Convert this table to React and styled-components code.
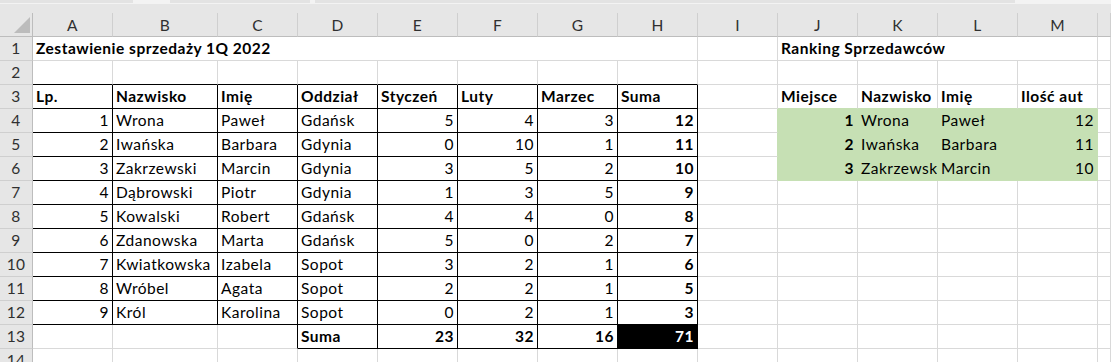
import React from 'react';
import styled, { createGlobalStyle } from 'styled-components';

const GlobalStyle = createGlobalStyle`
    body {
        margin: 0;
        background: #ffffff;
        font-family: Lato, "Liberation Sans", sans-serif;
        overflow: hidden;
    }
`

const GRID = '#d9d9d9';
const HEAD_BG = '#e6e6e6';
const HEAD_LINE = '#cfcfcf';
const GREEN = '#c6e0b4';

const Sheet = styled.div`
    width: 1111px;
    height: 362px;
    overflow: hidden;
    background: #ffffff;
`

// leftover bottom edge of the formula bar
const TopStrip = styled.div`
    height: 4px;
    background: #f3f3f3;
    display: flex;
`

const StripPiece = styled.div`
    width: ${props => props.width};
    margin-left: ${props => props.gap || '0'};
    height: 3px;
    background: #e3e3e3;
`

const HeaderPad = styled.div`
    height: 9px;
    background: ${HEAD_BG};
`

const Grid = styled.div`
    display: grid;
    grid-template-columns: 33px 80px 105px repeat(11, 80px) 1fr;
    grid-template-rows: 24px;
    grid-auto-rows: 24px;
`

const Corner = styled.div`
    box-sizing: border-box;
    background: ${HEAD_BG};
    border-right: 1px solid #bdbdbd;
    border-bottom: 1px solid #bdbdbd;
    display: flex;
    align-items: flex-end;
    justify-content: flex-end;
    padding: 0 2px 3px 0;
`

const ColHead = styled.div`
    box-sizing: border-box;
    background: ${HEAD_BG};
    border-right: 1px solid ${HEAD_LINE};
    border-bottom: 1px solid #bdbdbd;
    display: flex;
    align-items: center;
    justify-content: center;
    font-size: 15.5px;
    letter-spacing: 0.3px;
    color: #303030;
`

const RowHead = styled.div`
    box-sizing: border-box;
    background: ${HEAD_BG};
    border-right: 1px solid #bdbdbd;
    border-bottom: 1px solid ${HEAD_LINE};
    display: flex;
    align-items: flex-end;
    justify-content: center;
    padding-bottom: 3px;
    font-size: 15.5px;
    line-height: 18px;
    letter-spacing: 0.3px;
    color: #303030;
`

const Cell = styled.div`
    box-sizing: border-box;
    grid-column: span ${props => props.$span || 1};
    background: ${props => props.$fill || '#ffffff'};
    border-right: 1px solid ${props => props.$right};
    border-bottom: 1px solid ${props => props.$bottom};
    display: flex;
    align-items: flex-end;
    justify-content: ${props => props.$align === 'right' ? 'flex-end' : 'flex-start'};
    padding: 0 3px 3px 3px;
    font-size: 15.5px;
    line-height: 18px;
    letter-spacing: 0.5px;
    font-weight: ${props => props.$bold ? 700 : 400};
    color: ${props => props.$color || '#000000'};
    white-space: nowrap;
    overflow: hidden;
`

const COLS = ['A', 'B', 'C', 'D', 'E', 'F', 'G', 'H', 'I', 'J', 'K', 'L', 'M', 'N'];
const ROWS = 14;

const sales = [
    [1, 'Wrona', 'Paweł', 'Gdańsk', 5, 4, 3, 12],
    [2, 'Iwańska', 'Barbara', 'Gdynia', 0, 10, 1, 11],
    [3, 'Zakrzewski', 'Marcin', 'Gdynia', 3, 5, 2, 10],
    [4, 'Dąbrowski', 'Piotr', 'Gdynia', 1, 3, 5, 9],
    [5, 'Kowalski', 'Robert', 'Gdańsk', 4, 4, 0, 8],
    [6, 'Zdanowska', 'Marta', 'Gdańsk', 5, 0, 2, 7],
    [7, 'Kwiatkowska', 'Izabela', 'Sopot', 3, 2, 1, 6],
    [8, 'Wróbel', 'Agata', 'Sopot', 2, 2, 1, 5],
    [9, 'Król', 'Karolina', 'Sopot', 0, 2, 1, 3],
];

const ranking = [
    [1, 'Wrona', 'Paweł', 12],
    [2, 'Iwańska', 'Barbara', 11],
    [3, 'Zakrzewski', 'Marcin', 10],
];

const buildCells = () => {
    const cells = {};
    cells.A1 = { v: 'Zestawienie sprzedaży 1Q 2022', bold: true, span: 8 };
    cells.J1 = { v: 'Ranking Sprzedawców', bold: true, span: 4 };

    ['Lp.', 'Nazwisko', 'Imię', 'Oddział', 'Styczeń', 'Luty', 'Marzec', 'Suma'].forEach((v, i) => {
        cells[COLS[i] + 3] = { v, bold: true };
    });
    sales.forEach((row, r) => {
        row.forEach((v, c) => {
            cells[COLS[c] + (r + 4)] = { v, bold: c === 7 };
        });
    });
    cells.D13 = { v: 'Suma', bold: true };
    cells.E13 = { v: 23, bold: true };
    cells.F13 = { v: 32, bold: true };
    cells.G13 = { v: 16, bold: true };
    cells.H13 = { v: 71, bold: true, fill: '#000000', color: '#ffffff' };

    ['Miejsce', 'Nazwisko', 'Imię', 'Ilość aut'].forEach((v, i) => {
        cells[COLS[i + 9] + 3] = { v, bold: true };
    });
    ranking.forEach((row, r) => {
        row.forEach((v, c) => {
            cells[COLS[c + 9] + (r + 4)] = { v, bold: c === 0, fill: GREEN };
        });
    });
    return cells;
}

// black borders around the sales table
const boxed = (r, c) => {
    if (c < 0 || c > 7) return false;
    if (r >= 3 && r <= 12) return true;
    return r === 13 && c >= 3;
}

const edgeColor = (cells, a, b, boxA, boxB) => {
    if (boxA || boxB) return '#000000';
    const fa = cells[a] && cells[a].fill;
    const fb = cells[b] && cells[b].fill;
    if (fa && fa !== '#000000') return fa;
    if (fb && fb !== '#000000') return fb;
    return GRID;
}

const cells = buildCells();

const renderRow = (r) => {
    const out = [<RowHead key={'h' + r}>{r}</RowHead>];
    let c = 0;
    while (c < COLS.length) {
        const id = COLS[c] + r;
        const cell = cells[id] || {};
        const span = cell.span || 1;
        const last = c + span - 1;
        const right = edgeColor(cells, COLS[last] + r, COLS[last + 1] + r, boxed(r, last), boxed(r, last + 1));
        const bottom = edgeColor(cells, id, COLS[c] + (r + 1), boxed(r, c), boxed(r + 1, c));
        const align = typeof cell.v === 'number' ? 'right' : 'left';
        out.push(
            <Cell key={id} $span={span} $right={right} $bottom={bottom} $align={align}
                $bold={cell.bold} $fill={cell.fill} $color={cell.color}>
                {cell.v}
            </Cell>
        );
        c += span;
    }
    return out;
}

export default function App() {
    const rows = [];
    for (let r = 1; r <= ROWS; r++) rows.push(...renderRow(r));

    return (
        <>
            <GlobalStyle />
            <Sheet>
                <TopStrip>
                    <StripPiece width="133px" />
                    <StripPiece width="140px" gap="37px" />
                    <StripPiece width="700px" gap="5px" />
                </TopStrip>
                <HeaderPad />
                <Grid>
                    <Corner>
                        <svg width="16" height="16" viewBox="0 0 16 16">
                            <polygon points="16,0 16,16 0,16" fill="#bcbcbc" />
                        </svg>
                    </Corner>
                    {COLS.map(col => <ColHead key={col}>{col === 'N' ? '' : col}</ColHead>)}
                    {rows}
                </Grid>
            </Sheet>
        </>
    );
}
